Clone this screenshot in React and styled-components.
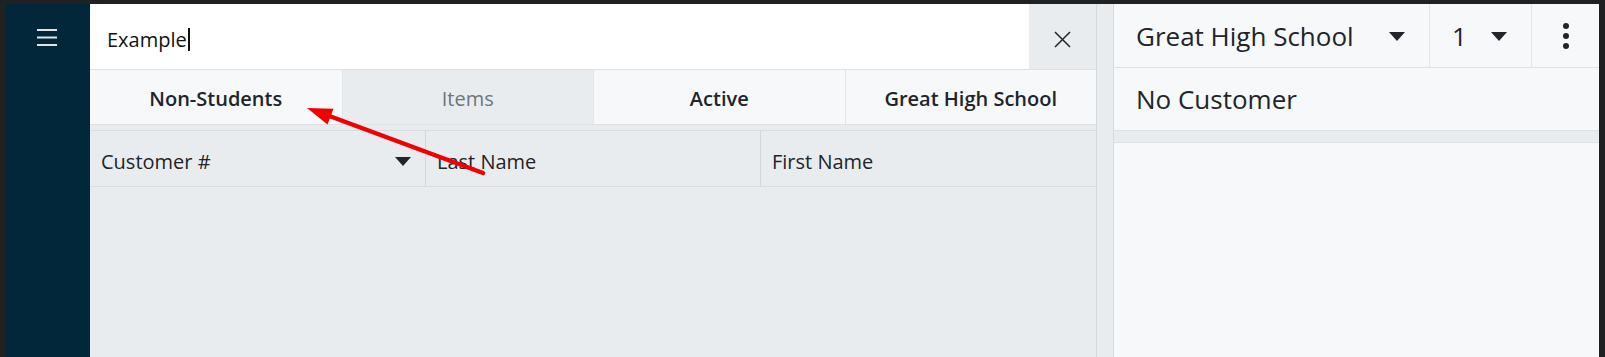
import React from 'react';
import styled, { createGlobalStyle } from 'styled-components';

const GlobalStyle = createGlobalStyle`
  html, body {
    margin: 0;
    padding: 0;
    background: #202122;
  }
  body {
    font-family: "Open Sans", "Noto Sans", sans-serif;
    color: #212529;
  }
`;

const Frame = styled.div`
  padding: 4px 6px 0;
  height: 357px;
  box-sizing: border-box;
`;

const Shell = styled.div`
  position: relative;
  display: flex;
  height: 353px;
  overflow: hidden;
  background: #e9ecef;
`;

const Sidebar = styled.aside`
  width: 84px;
  flex-shrink: 0;
  background: #02263a;
  display: flex;
  justify-content: center;
  padding-top: 25px;
  box-sizing: border-box;
`;

const MenuButton = styled.button`
  background: none;
  border: none;
  padding: 0;
  margin-left: -3px;
  height: 18px;
  cursor: pointer;
`;

const LeftPane = styled.section`
  width: 1006px;
  flex-shrink: 0;
  display: flex;
  flex-direction: column;
  background: #e9ecef;
  border-right: 1px solid #d6dadd;
`;

const SearchRow = styled.div`
  display: flex;
  height: 65px;
  border-bottom: 1px solid #dde1e5;
`;

const SearchField = styled.div`
  flex: 1;
  background: #fff;
  display: flex;
  align-items: center;
  padding: 6px 0 0 17px;
  font-size: 20px;
  color: #111;
`;

const Caret = styled.span`
  display: inline-block;
  width: 2px;
  height: 23px;
  margin-left: 1px;
  background: #111;
`;

const ClearButton = styled.button`
  width: 67px;
  border: none;
  background: #e9ecef;
  display: flex;
  align-items: center;
  justify-content: center;
  padding: 5px 0 0;
  cursor: pointer;
`;

const TabRow = styled.div`
  display: grid;
  grid-template-columns: repeat(4, 1fr);
  height: 54px;
  border-bottom: 1px solid #dde1e5;
`;

const Tab = styled.div`
  display: flex;
  align-items: center;
  justify-content: center;
  padding-top: 3px;
  font-size: 20px;
  font-weight: ${p => (p.$muted ? 400 : 600)};
  color: ${p => (p.$muted ? '#6c757d' : '#212529')};
  background: ${p => (p.$muted ? '#e9ecef' : '#f7f8fa')};
  border-left: ${p => (p.$first ? 'none' : '1px solid #e2e5e8')};
`;

const HeaderRow = styled.div`
  display: grid;
  grid-template-columns: 335px 335px 1fr;
  height: 55px;
  margin-top: 5px;
  border-top: 1px solid #d9dde1;
  border-bottom: 1px solid #d9dde1;
`;

const HeaderCell = styled.div`
  display: flex;
  align-items: center;
  justify-content: space-between;
  padding: 6px 14px 0 11px;
  font-size: 20px;
  color: #212529;
  border-left: ${p => (p.$first ? 'none' : '1px solid #d3d7db')};
  box-sizing: border-box;
`;

const Gutter = styled.div`
  width: 16px;
  flex-shrink: 0;
  background: #e9ecef;
`;

const RightPane = styled.section`
  flex: 1;
  display: flex;
  flex-direction: column;
  border-left: 1px solid #d6dadd;
  background: #e9ecef;
`;

const TopBar = styled.div`
  display: flex;
  height: 63px;
  background: #f7f8fa;
  border-bottom: 1px solid #dde1e5;
`;

const Picker = styled.div`
  display: flex;
  align-items: center;
  justify-content: space-between;
  flex: ${p => (p.$grow ? 1 : 'none')};
  width: ${p => (p.$width ? `${p.$width}px` : 'auto')};
  padding: 0 24px 0 ${p => p.$pad || 22}px;
  box-sizing: border-box;
  font-size: 26px;
  border-left: ${p => (p.$divided ? '1px solid #e2e5e8' : 'none')};

  svg {
    margin-top: 2px;
  }
`;

const Kebab = styled.div`
  width: 67px;
  display: flex;
  flex-direction: column;
  align-items: center;
  justify-content: center;
  gap: 4px;
  padding-top: 1px;
  border-left: 1px solid #e2e5e8;

  span {
    width: 6px;
    height: 6px;
    border-radius: 50%;
    background: #212529;
  }
`;

const CustomerRow = styled.div`
  height: 62px;
  display: flex;
  align-items: center;
  padding: 0 0 0 22px;
  font-size: 26px;
  background: #f7f8fa;
  border-bottom: 1px solid #dde1e5;
`;

const Detail = styled.div`
  flex: 1;
  margin-top: 11px;
  background: #f7f8fa;
  border-top: 1px solid #dde1e5;
`;

const Overlay = styled.svg`
  position: absolute;
  left: 0;
  top: 0;
  pointer-events: none;
`;

const Triangle = () => (
  <svg width="16" height="9" viewBox="0 0 16 9">
    <polygon points="0,0 16,0 8,9" fill="#212529" />
  </svg>
);

const App = () => {
  const tabs = [
    { label: 'Non-Students' },
    { label: 'Items', muted: true },
    { label: 'Active' },
    { label: 'Great High School' },
  ];
  const columns = ['Customer #', 'Last Name', 'First Name'];

  return (
    <>
      <GlobalStyle />
      <Frame>
        <Shell>
          <Sidebar>
            <MenuButton aria-label="menu">
              <svg width="20" height="18" viewBox="0 0 20 18">
                <rect x="0" y="0" width="20" height="2" fill="#dfe4e8" />
                <rect x="0" y="7.5" width="20" height="2" fill="#dfe4e8" />
                <rect x="0" y="15" width="20" height="2" fill="#dfe4e8" />
              </svg>
            </MenuButton>
          </Sidebar>

          <LeftPane>
            <SearchRow>
              <SearchField>
                Example
                <Caret />
              </SearchField>
              <ClearButton aria-label="clear">
                <svg width="17" height="17" viewBox="0 0 17 17">
                  <path d="M1 1 L16 16 M16 1 L1 16" stroke="#212529" strokeWidth="1.5" />
                </svg>
              </ClearButton>
            </SearchRow>

            <TabRow>
              {tabs.map((t, i) => (
                <Tab key={t.label} $muted={t.muted} $first={i === 0}>
                  {t.label}
                </Tab>
              ))}
            </TabRow>

            <HeaderRow>
              {columns.map((c, i) => (
                <HeaderCell key={c} $first={i === 0}>
                  {c}
                  {i === 0 && <Triangle />}
                </HeaderCell>
              ))}
            </HeaderRow>
          </LeftPane>

          <Gutter />

          <RightPane>
            <TopBar>
              <Picker $grow>
                Great High School
                <Triangle />
              </Picker>
              <Picker $width={102} $divided $pad={22}>
                1
                <Triangle />
              </Picker>
              <Kebab>
                <span />
                <span />
                <span />
              </Kebab>
            </TopBar>
            <CustomerRow>No Customer</CustomerRow>
            <Detail />
          </RightPane>

          <Overlay width="1593" height="353" viewBox="0 0 1593 353">
            <line x1="477" y1="169" x2="322" y2="111.5" stroke="#f20000" strokeWidth="4.5" strokeLinecap="round" />
            <polygon points="301,104 327.5,104.8 321.5,120.6" fill="#f20000" />
          </Overlay>
        </Shell>
      </Frame>
    </>
  );
};

export default App;
